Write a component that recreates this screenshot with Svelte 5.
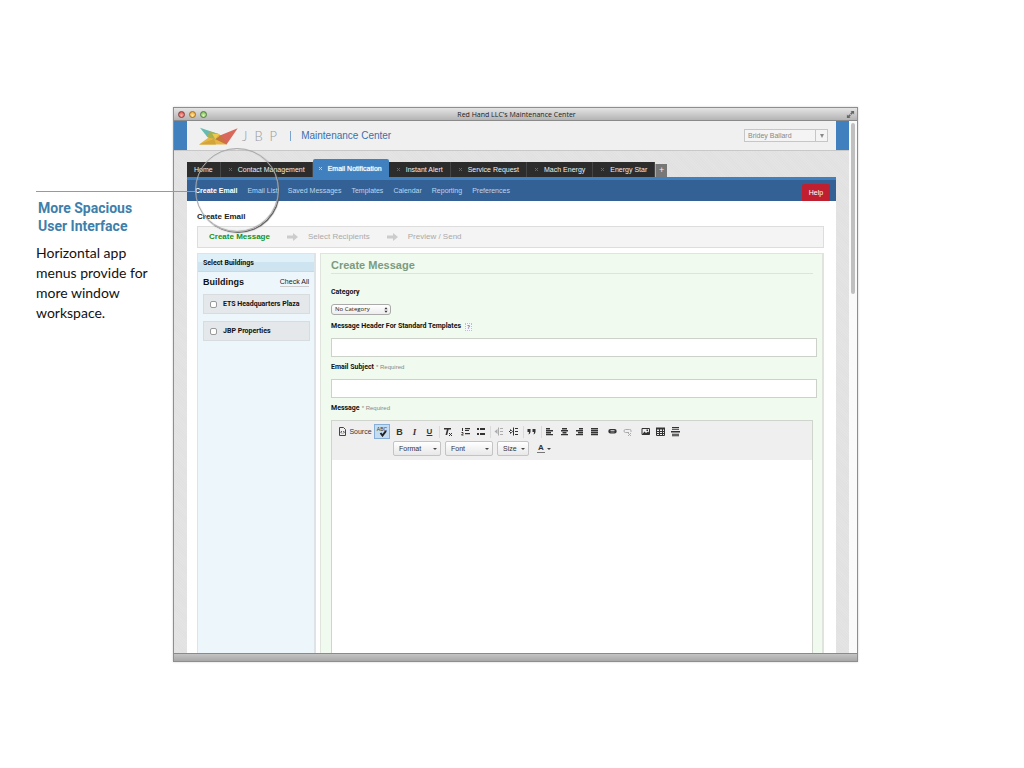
<script lang="ts">
	type Icon = { name: string; d?: string; fill?: string; muted?: boolean; letter?: string };

	const tabs = ['Home', 'Contact Management', 'Email Notification', 'Instant Alert', 'Service Request', 'Mach Energy', 'Energy Star'];
	const menu = ['Create Email', 'Email List', 'Saved Messages', 'Templates', 'Calendar', 'Reporting', 'Preferences'];
	const steps = ['Create Message', 'Select Recipients', 'Preview / Send'];
	const buildings = ['ETS Headquarters Plaza', 'JBP Properties'];

	const groups: { sep?: boolean; items: Icon[] }[] = [
		{
			sep: true,
			items: [
				{ name: 'Bold', letter: 'B' },
				{ name: 'Italic', letter: 'I' },
				{ name: 'Underline', letter: 'U' }
			]
		},
		{ items: [{ name: 'Remove Format', fill: 'M4 4h7v1.500H8.600L7.200 11H5.500l1.400-5.500H4z', d: 'M9 9l3 3M12 9l-3 3' }] },
		{
			sep: true,
			items: [
				{ name: 'Numbered List', d: 'M4.500 4v3M3.500 8.500h1.500v1l-1.500 1.500h2', fill: 'M7 4h5v1.300H7zM7 6h4v1H7zM7 9h5v1.300H7z' },
				{ name: 'Bulleted List', fill: 'M4 4h2v2H4zM4 9h2v2H4zM7 4h5v2H7zM7 9h5v2H7z' }
			]
		},
		{
			sep: true,
			items: [
				{ name: 'Decrease Indent', muted: true, d: 'M7.500 3.500v8', fill: 'M9 4h3v1H9zM9 7h3v1H9zM9 10h3v1H9zM6.500 5v5L3.500 7.500z' },
				{ name: 'Increase Indent', d: 'M7.500 3.500v8', fill: 'M9 4h3v1H9zM9 7h3v1H9zM9 10h3v1H9zM4 5v5l3-2.500zM3 7h3v1H3z' }
			]
		},
		{ sep: true, items: [{ name: 'Block Quote', fill: 'M3.500 5h3v3Q6 10 4.500 10.500Q5 9 5 8H3.500zM8.500 5h3v3Q11 10 9.500 10.500Q10 9 10 8H8.500z' }] },
		{
			items: [
				{ name: 'Align Left', fill: 'M4 4h4v1.500H4zM4 6h7v1.500H4zM4 8h5v1.500H4zM4 10h7v1.300H4z' },
				{ name: 'Center', fill: 'M5 4h5v1.500H5zM4 6h7v1.500H4zM5.500 8h4v1.500h-4zM4 10h7v1.300H4z' },
				{ name: 'Align Right', fill: 'M7 4h4v1.500H7zM4 6h7v1.500H4zM6 8h5v1.500H6zM4 10h7v1.300H4z' },
				{ name: 'Justify', fill: 'M4 4h7v1.500H4zM4 6h7v1.500H4zM4 8h7v1.500H4zM4 10h7v1.300H4z' }
			]
		},
		{
			items: [
				{ name: 'Link', fill: 'M5.500 5h4a2.200 2.200 0 0 1 0 4.400h-4a2.200 2.200 0 0 1 0-4.400zM5.500 6.300v.6h4v-.6zM5.500 7.700v.5h4v-.5z' },
				{ name: 'Unlink', muted: true, d: 'M9 8.500H5.500a1.300 1.300 0 0 1 0-3h4a1.300 1.300 0 0 1 1.500 1.500v1M8 9l3 3M11 9l-3 3' }
			]
		},
		{
			items: [
				{ name: 'Image', d: 'M4 4.500h7.500v6H4z', fill: 'M4 10.500l2.500-3 1.500 1.500 2-1.500 1.500 1.500v1.500zM8.500 5.500h1.500v1.500H8.500z' },
				{ name: 'Table', d: 'M3.500 4.500h8v7h-8zM3.500 7.500h8M3.500 9.500h8M6.500 5v6.500M9.500 5v6.500', fill: 'M3 3.500h9v2H3z' },
				{ name: 'Horizontal Line', fill: 'M4 3h7v1H4zM4 4.700h7v1H4zM3 7h9v1.500H3zM4 9.700h7v1H4zM4 11.300h7v1H4z' }
			]
		}
	];

	let activeTab = $state('Email Notification');
	let activeMenu = $state('Create Email');
	let checked = $state([false, false]);
	let header = $state('');
	let subject = $state('');
	let message = $state('');
</script>

<svelte:head>
	<title>Red Hand LLC's Maintenance Center</title>
</svelte:head>

<main class="slide">
	<aside class="note">
		<h1>More Spacious User Interface</h1>
		<p>Horizontal app menus provide for more window workspace.</p>
	</aside>

	<section class="window">
		<div class="titlebar">
			<div class="lights">
				<span class="light red"></span>
				<span class="light amber"></span>
				<span class="light green"></span>
			</div>
			<span class="titlebar-text">Red Hand LLC's Maintenance Center</span>
			<svg class="expand" viewBox="0 0 10 10" aria-hidden="true">
				<path d="M5 1h4v4L7.700 3.700 6 5.400 4.600 4 6.300 2.300zM5 9H1V5l1.300 1.300L4 4.600 5.400 6 3.700 7.700z" />
			</svg>
		</div>

		<div class="viewport">
			<div class="page">
				<header class="header">
					<svg class="logo" viewBox="88 76 119 54" role="img" aria-label="JBP">
						<path fill="#65bbb3" d="M91 78L148 97 140 113 114 107z" />
						<path fill="#e5b442" d="M88 129L128 100 150 97 172 129z" />
						<path fill="#a7b052" d="M112 103L122 89 148 97 142 112 118 108z" />
						<path fill="#efc84e" d="M128 96L150 97 138 113z" />
						<path fill="#d4a339" d="M88 129L134 112 140 129z" />
						<path fill="#d9685b" d="M206 79L148 103 172 129z" />
						<path fill="#c9743c" d="M138 113L156 100 172 129z" />
					</svg>
					<span class="wordmark">JBP</span>
					<span class="product">Maintenance Center</span>
					<div class="user">
						<select aria-label="User"><option>Bridey Ballard</option></select>
						<span class="user-arrow"></span>
					</div>
				</header>

				<div class="body">
					<div class="tabs">
						{#each tabs as tab, i}
							<button class="tab" class:active={tab === activeTab} onclick={() => (activeTab = tab)}>
								{#if i > 0}
									<svg class="close" viewBox="0 0 5 5" aria-hidden="true"><path d="M1 1l3 3M4 1l-3 3" /></svg>
								{/if}
								{tab}
							</button>
						{/each}
						<button class="add" aria-label="Add tab">+</button>
					</div>

					<nav class="menu">
						{#each menu as item}
							<a href="#top" class:current={item === activeMenu} onclick={() => (activeMenu = item)}>{item}</a>
						{/each}
						<button class="help">Help</button>
					</nav>

					<div class="content">
						<h2>Create Email</h2>
						<ol class="steps">
							{#each steps as step, i}
								<li class:done={i === 0}>
									{#if i > 0}
										<svg class="arrow" viewBox="0 0 11 8" aria-hidden="true"><path d="M0 2.500h6V0l5 4-5 4V5.500H0z" /></svg>
									{/if}
									{step}
								</li>
							{/each}
						</ol>

						<div class="columns">
							<div class="sidebar">
								<h3>Select Buildings</h3>
								<div class="sidebar-head">
									<h4>Buildings</h4>
									<a href="#all">Check All</a>
								</div>
								{#each buildings as building, i}
									<label class="building">
										<input type="checkbox" bind:checked={checked[i]} />
										{building}
									</label>
								{/each}
							</div>

							<form class="form">
								<h3>Create Message</h3>
								<label class="label" for="category">Category</label>
								<div class="category">
									<select id="category"><option>No Category</option></select>
									<svg viewBox="0 0 5 7" aria-hidden="true"><path d="M2.500 0L4.500 2.500h-4zM2.500 7L.5 4.500h4z" /></svg>
								</div>
								<label class="label" for="header">Message Header For Standard Templates <span class="hint">?</span></label>
								<input class="text" id="header" type="text" bind:value={header} />
								<label class="label" for="subject">Email Subject <small>* Required</small></label>
								<input class="text" id="subject" type="text" bind:value={subject} />
								<label class="label" for="message">Message <small>* Required</small></label>

								<div class="editor">
									<div class="toolbar">
										<div class="row">
											<button type="button" class="source">
												<svg viewBox="0 0 9 9" aria-hidden="true">
													<path d="M1.500.5h4l2 2v6h-6zM3.800 4L2.800 5.200l1 1.200M5.300 4l1 1.200-1 1.200" />
												</svg>
												Source
											</button>
											<button type="button" class="spell" aria-label="Spell check">
												<span>ABC</span>
												<svg viewBox="0 0 9 6" aria-hidden="true"><path d="M2.500 2l2 2.500L8 0" /></svg>
											</button>
											{#each groups as group}
												<div class="group" class:sep={group.sep}>
													{#each group.items as item}
														<button type="button" class="tool" class:muted={item.muted} aria-label={item.name}>
															{#if item.letter}
																<span class="letter {item.name.toLowerCase()}">{item.letter}</span>
															{:else}
																<svg viewBox="0 0 15 15" aria-hidden="true">
																	{#if item.d}<path class="line" d={item.d} />{/if}
																	{#if item.fill}<path fill-rule="evenodd" d={item.fill} />{/if}
																</svg>
															{/if}
														</button>
													{/each}
												</div>
											{/each}
										</div>
										<div class="row combos">
											<button type="button" class="combo">Format</button>
											<button type="button" class="combo">Font</button>
											<button type="button" class="combo short">Size</button>
											<button type="button" class="color"><span>A</span></button>
										</div>
									</div>
									<textarea id="message" bind:value={message}></textarea>
								</div>
							</form>
						</div>
					</div>
				</div>
			</div>
			<div class="scrollbar"><div class="thumb"></div></div>
		</div>
		<div class="statusbar"></div>

		<div class="pointer"></div>
		<div class="lens"></div>
	</section>
</main>

<style>
	:global(body) { background: #fff; }
	* { box-sizing: border-box; }
	h1, h2, h3, h4, p, ol { margin: 0; padding: 0; }
	button, select, input, textarea { font: inherit; color: inherit; margin: 0; padding: 0; border: 0; background: none; border-radius: 0; }
	a { color: inherit; text-decoration: none; }

	.slide { display: grid; grid-template-columns: 137px 1fr; padding: 107px 166px 107px 36px; }

	.note { padding: 92px 0 0; font-family: Lato, "Gill Sans", sans-serif; }
	.note h1 { width: 120px; padding-left: 2px; font: bold 14px/18px Roboto, sans-serif; color: #3e80ab; }
	.note p { width: 120px; padding-top: 8px; font-size: 14px; line-height: 20px; color: #111; }

	.window { position: relative; border: 1px solid #8e8e8e; box-shadow: 0 0 2px #ccc; font: 7px/9px "Liberation Sans", Helvetica, sans-serif; color: #222; }

	.titlebar { display: grid; grid-template-columns: 1fr auto 1fr; align-items: center; height: 13px; padding: 0 2px 0 4px; background: linear-gradient(#e4e4e4, #b4b4b4); border-bottom: 1px solid #8a8a8a; }
	.titlebar-text { font: 7px/9px "Open Sans", sans-serif; color: #222; }
	.lights { display: flex; gap: 4px; }
	.light { width: 7px; height: 7px; border-radius: 50%; border: 1px solid #8a3a36; background: radial-gradient(circle at 50% 70%, #ffb3ac, #d8413b); }
	.light.amber { border-color: #9b702c; background: radial-gradient(circle at 50% 70%, #ffeaa0, #e79a2c); }
	.light.green { border-color: #4d7f3b; background: radial-gradient(circle at 50% 70%, #dcf7b5, #66b145); }
	.expand { width: 9px; height: 9px; justify-self: end; fill: #666; }

	.viewport { display: flex; }
	.page { flex: 1; min-width: 0; background: #e2e2e2 repeating-linear-gradient(45deg, #e4e4e4 0 1px, #e1e1e1 1px 2px); }
	.scrollbar { width: 8px; padding: 2px 2px 0; background: #fafafa; }
	.thumb { height: 171px; border-radius: 3px; background: #c0c0c0; }
	.statusbar { height: 8px; background: linear-gradient(#c4c4c4, #a8a8a8); border-top: 1px solid #8a8a8a; }

	.header { display: flex; align-items: center; height: 29px; padding: 0 8px 0 12px; background: #f0f0f0; border: solid #4180bf; border-width: 0 13px; box-shadow: 0 1px #c8c8c8; }
	.logo { width: 39px; height: 18px; }
	.wordmark { display: flex; padding: 0 6px 0 4px; font: 300 13px/18px Lato, sans-serif; letter-spacing: 7px; color: #999; }
	.product { padding-left: 10px; border-left: 1px solid #7ba3cc; font-size: 10px; line-height: 10px; color: #3a6fae; }
	.user { display: flex; align-items: center; width: 84px; height: 13px; margin-left: auto; border: 1px solid #c6c6c6; background: #f4f4f4; color: #888; }
	.user select { flex: 1; height: 11px; padding-left: 3px; appearance: none; }
	.user-arrow { display: flex; align-items: center; justify-content: center; width: 12px; height: 11px; border-left: 1px solid #c6c6c6; }
	.user-arrow::before { content: ""; border: solid transparent; border-width: 4px 2px 0; border-top-color: #888; }

	.body { padding: 9px 13px 0; }
	.tabs { display: flex; align-items: flex-end; }
	.tab { display: flex; align-items: center; gap: 5px; height: 15px; padding: 0 7px; background: #2c2c2c; border-right: 1px solid #454545; color: #eee; white-space: nowrap; }
	.tab.active { height: 18px; padding-left: 5px; border: 0; border-radius: 2px 2px 0 0; background: #4180bf; color: #fff; text-shadow: 0 0 1px #fff; }
	.close { width: 5px; height: 5px; fill: none; stroke: #666; }
	.active .close { stroke: #a9c9ea; }
	.add { width: 12px; height: 13px; border-left: 1px solid #aaa; background: #777; color: #eee; font-size: 9px; line-height: 9px; }

	.menu { display: flex; align-items: center; gap: 10px; height: 24px; padding: 3px 6px 0 8px; border-top: 3px solid #4180bf; background: #346195; color: #bcd5ee; white-space: nowrap; }
	.menu a { padding-bottom: 3px; }
	.menu .current { font-weight: bold; color: #fff; }
	.help { align-self: flex-end; width: 28px; height: 17px; margin-left: auto; border-radius: 2px 2px 0 0; background: #c01f30; color: #fff; }

	.content { padding: 11px 12px 0 10px; background: #fff; }
	h2 { font-size: 8px; line-height: 10px; }
	.steps { display: flex; align-items: center; gap: 17px; height: 22px; margin-top: 4px; padding: 0 11px; border: 1px solid #ddd; background: #f4f4f4; list-style: none; font-size: 8px; line-height: 10px; color: #aaa; }
	.steps li { display: flex; align-items: center; gap: 10px; }
	.steps .done { font-weight: bold; color: #14911c; }
	.arrow { width: 11px; height: 8px; fill: #ccc; }

	.columns { display: grid; grid-template-columns: 119px 1fr; gap: 4px; margin-top: 5px; }
	.sidebar { border: solid #dde3e6; border-width: 1px 2px 0 1px; background: #edf7fb; }
	.sidebar h3 { height: 18px; padding-left: 5px; border-bottom: 1px solid #c3dbe8; background: linear-gradient(#dff0f8 50%, #cfe4f1 50%); font: bold 7px/19px Roboto, sans-serif; color: #111; }
	.sidebar-head { display: flex; align-items: center; justify-content: space-between; padding: 4px 5px 6px; }
	.sidebar-head h4 { font-size: 9px; line-height: 12px; color: #111; }
	.sidebar-head a { border-bottom: 1px solid #ccc; line-height: 8px; }
	.building { display: flex; align-items: center; gap: 6px; height: 20px; margin: 0 4px 7px 5px; padding-left: 6px; border: 1px solid #d8dcde; background: #e4e8ea; font: bold 7px/9px Roboto, sans-serif; color: #111; }
	.building input { width: 7px; height: 7px; appearance: none; border: 1px solid #999; border-radius: 2px; background: #fff; }
	.building input:checked { background: #4180bf; }

	.form { min-width: 0; padding: 5px 5px 0 10px; border: solid #dfe4dd; border-width: 1px 2px 0 1px; background: #f0faee; }
	.form h3 { margin-right: 4px; padding-bottom: 1px; border-bottom: 1px solid #dde4da; font-size: 11px; line-height: 13px; color: #7c9a80; }
	.label { display: flex; align-items: center; gap: 2px; height: 9px; font: bold 7px/9px Roboto, sans-serif; color: #111; }
	.label small { font: 6px/9px "Liberation Sans", sans-serif; color: #888; }
	.form h3 + .label { margin-top: 14px; }
	.hint { width: 7px; margin-left: 2px; border: 1px dotted #b5c3d5; background: #f5f8fc; font-size: 6px; line-height: 6px; text-align: center; color: #5d7ba0; }
	.category { display: flex; align-items: center; width: 60px; height: 11px; margin: 7px 0; border: 1px solid #aaa; border-radius: 3px; background: linear-gradient(#fff, #ededed); }
	.category select { flex: 1; height: 9px; padding-left: 3px; appearance: none; font: 6px/9px "Open Sans", sans-serif; }
	.category svg { width: 4px; height: 6px; margin-right: 2px; fill: #333; }
	.text { display: block; width: 100%; height: 19px; margin: 7px 0 6px; padding: 0 4px; border: 1px solid #ccd2ca; background: #fff; }

	.editor { margin: 7px 4px 0 0; border: solid #cfd5cd; border-width: 1px 1px 0; background: #fff; }
	.toolbar { padding: 3px 6px 4px; background: #efefef; color: #333; }
	.row { display: flex; align-items: center; height: 15px; }
	.source { display: flex; align-items: center; justify-content: center; gap: 2px; width: 34px; height: 15px; margin-right: 2px; }
	.source svg { width: 9px; height: 9px; fill: none; stroke: #444; }
	.spell { display: flex; flex-direction: column; align-items: center; justify-content: center; width: 16px; height: 15px; margin-right: 2px; border: 1px solid #86aed6; background: #c3dcf2; font: 5px/4px "Liberation Sans", sans-serif; }
	.spell svg { width: 9px; height: 6px; fill: none; stroke: #222; stroke-width: 2; }
	.group { display: flex; flex: none; padding-right: 2px; border-right: 1px solid transparent; }
	.group.sep { border-right-color: #dadada; }
	.tool { display: flex; align-items: center; justify-content: center; width: 15px; height: 12px; }
	.tool svg { flex: none; width: 15px; height: 15px; fill: #333; }
	.tool .line { fill: none; stroke: #333; }
	.muted { opacity: 0.35; }
	.letter { font: bold 9px/10px "Liberation Sans", sans-serif; }
	.italic { font-family: "Liberation Serif", serif; font-style: italic; }
	.underline { font-size: 8px; text-decoration: underline; }
	.combos { gap: 4px; margin-top: 2px; padding-left: 55px; }
	.combo { display: flex; align-items: center; justify-content: space-between; width: 48px; height: 15px; padding: 0 3px 0 5px; border: 1px solid #c4c4c4; border-radius: 2px; background: linear-gradient(#fff, #e8e8e8); }
	.combo.short { width: 32px; }
	.combo::after, .color::after { content: ""; border: solid transparent; border-width: 2px 2px 0; border-top-color: #444; }
	.color { display: flex; align-items: center; gap: 2px; margin-left: 4px; font-weight: bold; font-size: 8px; line-height: 8px; }
	.color span { padding: 0 1px; border-bottom: 1px solid #777; }
	textarea { display: block; width: 100%; height: 193px; padding: 6px; resize: none; background: #fff; }
	input:focus, textarea:focus { outline: 1px solid #9fc3e6; }

	.pointer { position: absolute; top: 83px; left: -138px; width: 160px; height: 1px; background: #999; }
	.lens { position: absolute; top: 40px; left: 21px; width: 84px; height: 84px; border: 1px solid #aaa; border-radius: 50%; box-shadow: 1px 1px 1px #555, inset 0 0 1px #999; pointer-events: none; }
</style>
